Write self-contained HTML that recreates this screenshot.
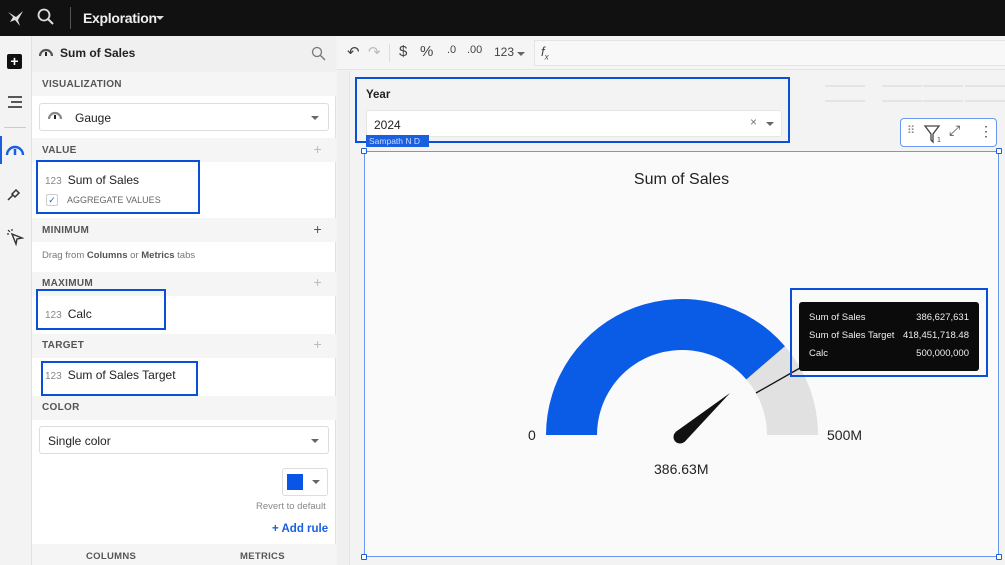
<!DOCTYPE html>
<html><head><meta charset="utf-8"><style>
*{box-sizing:border-box;margin:0;padding:0}
body{width:1005px;height:565px;overflow:hidden;font-family:"Liberation Sans",sans-serif;background:#f3f3f3;position:relative;color:#222}
.a{position:absolute}
.top{left:0;top:0;width:1005px;height:36px;background:#111}
.rail{left:0;top:36px;width:32px;height:529px;background:#f3f3f3;border-right:1px solid #e2e2e2}
.panel{left:32px;top:36px;width:304px;height:529px;background:#fff;border-right:1px solid #e0e0e0}
.sec{position:absolute;left:0;width:304px;background:#f5f5f5;font-size:10px;font-weight:bold;color:#555;padding-left:10px;letter-spacing:.3px}
.plus{position:absolute;right:14px;color:#bbb;font-size:14px;font-weight:normal}
.item{position:absolute;font-size:12px;color:#222}
.n{color:#888;font-size:10px;margin-right:6px}
.box{position:absolute;border:2px solid #0a4fd8}
.sel{position:absolute;border:1px solid #ddd;border-radius:3px;background:#fff;font-size:12px}
.caret{position:absolute;width:0;height:0;border-left:4px solid transparent;border-right:4px solid transparent;border-top:4px solid #666}
</style></head><body>
<div class="a top">
<svg class="a" style="left:6px;top:8px" width="20" height="20" viewBox="0 0 20 20"><path d="M2 4 L10 9 L17 3 L12 12 L14 18 L9 12 L4 14 L7 9Z" fill="#ddd"/></svg>
<svg class="a" style="left:37px;top:8px" width="18" height="18" viewBox="0 0 18 18"><circle cx="7" cy="7" r="5.5" stroke="#ddd" stroke-width="1.8" fill="none"/><path d="M11 11 L16 16" stroke="#ddd" stroke-width="2"/></svg>
<div class="a" style="left:70px;top:7px;width:1px;height:22px;background:#555"></div>
<div class="a" style="left:83px;top:10px;color:#eee;font-size:14px;font-weight:bold;letter-spacing:-0.3px">Exploration</div>
<div class="caret" style="left:156px;top:16px;border-top-color:#ddd"></div>
</div>
<div class="a rail">
<div class="a" style="left:7px;top:18px;width:15px;height:15px;background:#111;border-radius:2px;color:#fff;font-size:14px;line-height:14px;text-align:center;font-weight:bold">+</div>
<svg class="a" style="left:7px;top:60px" width="16" height="12"><path d="M1 1H15M4 6H15M1 11H15" stroke="#222" stroke-width="1.6"/></svg>
<div class="a" style="left:4px;top:91px;width:22px;height:1px;background:#ccc"></div>
<div class="a" style="left:0;top:100px;width:2px;height:28px;background:#1a5fe0"></div>
<svg class="a" style="left:5px;top:105px" width="20" height="16"><path d="M2 14 A8 8 0 0 1 18 14" stroke="#1a5fe0" stroke-width="2.4" fill="none"/><path d="M10 8 L10 14" stroke="#1a5fe0" stroke-width="2.5"/></svg>
<svg class="a" style="left:6px;top:150px" width="16" height="16"><path d="M2 14 L7 9 M6 8 L10 4 L13 7 L9 11Z" stroke="#333" stroke-width="1.5" fill="none"/></svg>
<svg class="a" style="left:6px;top:192px" width="18" height="18"><path d="M6 6 L16 10 L11 11 L10 16Z" stroke="#333" stroke-width="1.4" fill="none"/><path d="M2 2 L4 4M6 1V3M1 6H3" stroke="#333" stroke-width="1.2"/></svg>
</div>
<div class="a panel">
<div class="sec" style="top:0;height:36px;background:#f0f0f0;font-size:12px;color:#222;padding-top:10px;padding-left:28px;letter-spacing:0">Sum of Sales</div>
<svg class="a" style="left:7px;top:11px" width="14" height="10"><path d="M1 9 A6 6 0 0 1 13 9" stroke="#555" stroke-width="2.2" fill="none"/><path d="M7 5V9" stroke="#222" stroke-width="2"/></svg>
<svg class="a" style="left:279px;top:10px" width="15" height="15"><circle cx="6" cy="6" r="4.5" stroke="#777" stroke-width="1.3" fill="none"/><path d="M9.5 9.5 L14 14" stroke="#777" stroke-width="1.4"/></svg>
<div class="sec" style="top:36px;height:24px;padding-top:7px">VISUALIZATION</div>
<div class="sel" style="left:7px;top:67px;width:290px;height:28px;padding:7px 0 0 35px">Gauge</div>
<svg class="a" style="left:16px;top:74px" width="14" height="10"><path d="M1 9 A6 6 0 0 1 13 9" stroke="#888" stroke-width="2.2" fill="none"/><path d="M7 5V9" stroke="#222" stroke-width="2"/></svg>
<div class="caret" style="left:279px;top:80px"></div>
<div class="sec" style="top:102px;height:24px;padding-top:7px">VALUE<span class="plus" style="top:3px">+</span></div>
<div class="item" style="left:13px;top:137px"><span class="n">123</span>Sum of Sales</div>
<div class="a" style="left:14px;top:158px;width:12px;height:12px;border:1px solid #ccc;border-radius:2px;color:#1a5fe0;font-size:9px;line-height:11px;text-align:center">✓</div>
<div class="a" style="left:35px;top:159px;font-size:9px;color:#666">AGGREGATE VALUES</div>
<div class="sec" style="top:182px;height:24px;padding-top:7px">MINIMUM<span class="plus" style="top:3px;color:#555">+</span></div>
<div class="a" style="left:10px;top:214px;font-size:9.5px;color:#777">Drag from <b style="color:#555">Columns</b> or <b style="color:#555">Metrics</b> tabs</div>
<div class="sec" style="top:236px;height:24px;padding-top:6px">MAXIMUM<span class="plus" style="top:2px">+</span></div>
<div class="item" style="left:13px;top:271px"><span class="n">123</span>Calc</div>
<div class="sec" style="top:298px;height:24px;padding-top:6px">TARGET<span class="plus" style="top:2px">+</span></div>
<div class="item" style="left:13px;top:332px"><span class="n">123</span>Sum of Sales Target</div>
<div class="sec" style="top:360px;height:24px;padding-top:6px">COLOR</div>
<div class="sel" style="left:7px;top:390px;width:290px;height:28px;padding:7px 0 0 8px">Single color</div>
<div class="caret" style="left:279px;top:403px"></div>
<div class="sel" style="left:250px;top:432px;width:46px;height:28px"></div>
<div class="a" style="left:255px;top:438px;width:16px;height:16px;background:#0a55e6"></div>
<div class="caret" style="left:280px;top:444px"></div>
<div class="a" style="left:224px;top:465px;font-size:9.5px;color:#888">Revert to default</div>
<div class="a" style="left:240px;top:487px;font-size:11.5px;color:#1a5fe0;font-weight:bold">+ Add rule</div>
<div class="sec" style="top:508px;height:21px;padding:7px 0 0 54px;font-size:9.5px">COLUMNS<span style="position:absolute;left:208px">METRICS</span></div>
</div>
<div class="box" style="left:36px;top:160px;width:164px;height:54px"></div>
<div class="box" style="left:36px;top:289px;width:130px;height:41px"></div>
<div class="box" style="left:41px;top:361px;width:157px;height:35px"></div>
<!-- toolbar -->
<div class="a" style="left:337px;top:36px;width:668px;height:34px;background:#f5f5f5;border-bottom:1px solid #e4e4e4;font-size:15px;color:#444">
<span class="a" style="left:10px;top:7px">↶</span><span class="a" style="left:31px;top:7px;color:#bbb">↷</span>
<div class="a" style="left:52px;top:8px;width:1px;height:18px;background:#ddd"></div>
<span class="a" style="left:62px;top:7px">$</span><span class="a" style="left:83px;top:7px">%</span>
<span class="a" style="left:110px;top:8px;font-size:11px">.0</span><span class="a" style="left:130px;top:8px;font-size:11px">.00</span>
<span class="a" style="left:157px;top:9px;font-size:12px">123</span><div class="caret" style="left:180px;top:16px"></div>
<div class="a" style="left:197px;top:4px;width:480px;height:26px;border:1px solid #e4e4e4;border-right:none;background:#f8f8f8"></div>
<span class="a" style="left:204px;top:8px;font-size:13px;font-style:italic">f<sub style="font-size:8px">x</sub></span>
</div>
<!-- canvas -->
<div class="a" style="left:337px;top:71px;width:13px;height:494px;background:#f0f0f0;border-right:1px solid #e4e4e4"></div>
<div class="a" style="left:355px;top:77px;width:435px;height:66px;background:#f3f3f3;border:2px solid #0a4fd8"></div>
<div class="a" style="left:366px;top:89px;font-size:11.5px;font-weight:bold">Year</div>
<div class="sel" style="left:366px;top:110px;width:416px;height:27px;padding:7px 0 0 7px;border-color:#e6e6e6">2024</div>
<div class="a" style="left:750px;top:115px;color:#777;font-size:12px">×</div>
<div class="caret" style="left:766px;top:122px"></div>
<div class="a" style="left:366px;top:135px;width:63px;height:12px;background:#1a5fe0;color:#cfdcff;font-size:8.5px;padding-left:3px;line-height:12px">Sampath N D</div>
<svg class="a" style="left:795px;top:80px" width="210" height="22"><path d="M30 6H70M87 6H127M128 6H168M170 6H210M30 21H70M87 21H127M128 21H168M170 21H210" stroke="#e0e0e0" stroke-width="1.5"/></svg>
<div class="a" style="left:900px;top:118px;width:97px;height:29px;background:#fff;border:1px solid #6a98ef;border-radius:4px;font-size:14px;color:#444">
<span class="a" style="left:6px;top:5px;font-size:11px;letter-spacing:-1px;color:#888">⠿</span>
<svg class="a" style="left:22px;top:5px" width="20" height="20"><path d="M2 2H16L10 10V18L8 16V10Z" stroke="#444" stroke-width="1.3" fill="none"/><text x="14" y="18" font-size="7" fill="#444">1</text></svg>
<span class="a" style="left:48px;top:3px">⤢</span><span class="a" style="left:78px;top:4px">⋮</span>
</div>
<div class="a" style="left:364px;top:151px;width:635px;height:406px;background:#fafafa;border:1px solid #6a98ef"></div>
<div class="a" style="left:361px;top:148px;width:6px;height:6px;background:#fff;border:1px solid #1a5fe0;border-radius:1px"></div>
<div class="a" style="left:996px;top:148px;width:6px;height:6px;background:#fff;border:1px solid #1a5fe0;border-radius:1px"></div>
<div class="a" style="left:361px;top:554px;width:6px;height:6px;background:#fff;border:1px solid #1a5fe0;border-radius:1px"></div>
<div class="a" style="left:996px;top:554px;width:6px;height:6px;background:#fff;border:1px solid #1a5fe0;border-radius:1px"></div>
<div class="a" style="left:364px;top:171px;width:635px;text-align:center;font-size:16px;color:#222">Sum of Sales</div>
<svg class="a" style="left:0;top:0" width="1005" height="565">
<path d="M546 435 A136 136 0 0 1 785 346.2 L746.4 379.5 A85 85 0 0 0 597 435Z" fill="#0a5ce6"/>
<path d="M785 346.2 A136 136 0 0 1 818 435 L767 435 A85 85 0 0 0 746.4 379.5Z" fill="#e1e1e1"/>
<path d="M756 393 L800 368" stroke="#111" stroke-width="1.3"/>
<circle cx="680" cy="437" r="6.5" fill="#111"/>
<path d="M675.5 432 L684.5 442 L730 393Z" fill="#111"/>
<text x="528" y="440" font-size="14" fill="#222" font-family="Liberation Sans">0</text>
<text x="827" y="440" font-size="14" fill="#222" font-family="Liberation Sans">500M</text>
<text x="654" y="474" font-size="14" fill="#222" font-family="Liberation Sans">386.63M</text>
</svg>
<div class="a" style="left:799px;top:302px;width:180px;height:69px;background:#0b0b0b;border-radius:3px;color:#eee;font-size:9.5px">
<div class="a" style="left:10px;top:10px">Sum of Sales</div><div class="a" style="right:10px;top:10px">386,627,631</div>
<div class="a" style="left:10px;top:28px">Sum of Sales Target</div><div class="a" style="right:10px;top:28px">418,451,718.48</div>
<div class="a" style="left:10px;top:46px">Calc</div><div class="a" style="right:10px;top:46px">500,000,000</div>
</div>
<div class="box" style="left:790px;top:288px;width:198px;height:89px"></div>
</body></html>
